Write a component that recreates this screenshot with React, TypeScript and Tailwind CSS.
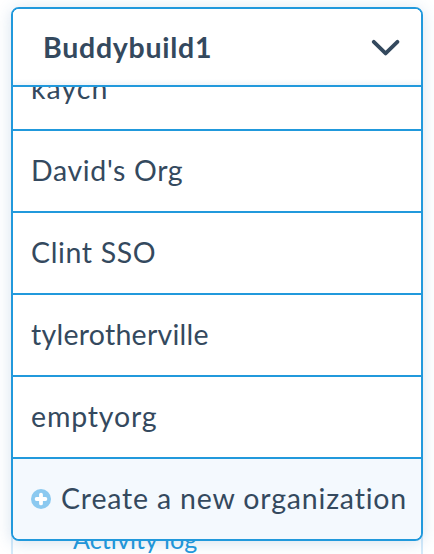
import React from "react";

type Org = { name: string; tracking: string };

const orgs: Org[] = [
  { name: "kaych", tracking: "tracking-[1.05px]" },
  { name: "David's Org", tracking: "tracking-[0.64px]" },
  { name: "Clint SSO", tracking: "tracking-[0.64px]" },
  { name: "tylerotherville", tracking: "tracking-[0.26px]" },
  { name: "emptyorg", tracking: "tracking-[0.83px]" },
];

function Chevron() {
  return (
    <svg width="30" height="18" viewBox="0 0 30 18" fill="none" className="shrink-0">
      <path d="M3.8 3.8 15.6 15.4 27.4 3.8" stroke="#34495e" strokeWidth="3.8" strokeLinecap="round" strokeLinejoin="round" />
    </svg>
  );
}

function PlusBadge() {
  return (
    <svg width="20" height="20" viewBox="0 0 20 20" className="shrink-0">
      <circle cx="10" cy="10" r="10" fill="#8bc9f0" />
      <path d="M10 5.6v8.8M5.6 10h8.8" stroke="#fff" strokeWidth="3.8" strokeLinecap="round" />
    </svg>
  );
}

export default function App() {
  return (
    <div className="relative flex h-[554px] w-[434px] flex-col justify-end overflow-hidden bg-white font-['Lato',sans-serif] text-[28.5px] leading-[42px] text-[#34495e] antialiased">
      <div className="ml-[11px] flex h-[60px] w-[412px] flex-col justify-end border-x-2 border-[#d3eafa]">
        <a className="block pl-[60px] text-[25px] leading-[30px] tracking-[0.1px] whitespace-nowrap text-[#2199dc]">Activity log</a>
      </div>
      <div className="absolute top-[7px] left-[11px] flex h-[534px] w-[412px] flex-col overflow-hidden rounded-[8px] border-2 border-[#2199dc] bg-white shadow-[0_2px_16px_rgba(52,110,170,0.2)]">
        <button className="relative z-10 flex h-[78px] shrink-0 items-center justify-between border-b-2 border-[#2199dc] bg-white bg-linear-to-t from-[#eff5fa] to-white to-[6px] pr-[21px] pl-[30px] font-bold">
          <span className="pb-px leading-[34px] tracking-[0.73px]">Buddybuild1</span>
          <Chevron />
        </button>
        <ul className="flex h-[372px] flex-col justify-end overflow-hidden">
          {orgs.map((org) => (
            <li key={org.name} className="flex h-[82px] shrink-0 items-center border-b-2 border-[#2199dc] pb-[2px] pl-[18px] whitespace-nowrap">
              <span className={org.tracking}>{org.name}</span>
            </li>
          ))}
        </ul>
        <button className="flex h-[80px] shrink-0 items-center gap-[10px] bg-[#f4f9fe] pl-[18px] whitespace-nowrap">
          <PlusBadge />
          <span className="pb-[2px] tracking-[0.82px]">Create a new organization</span>
        </button>
      </div>
    </div>
  );
}
